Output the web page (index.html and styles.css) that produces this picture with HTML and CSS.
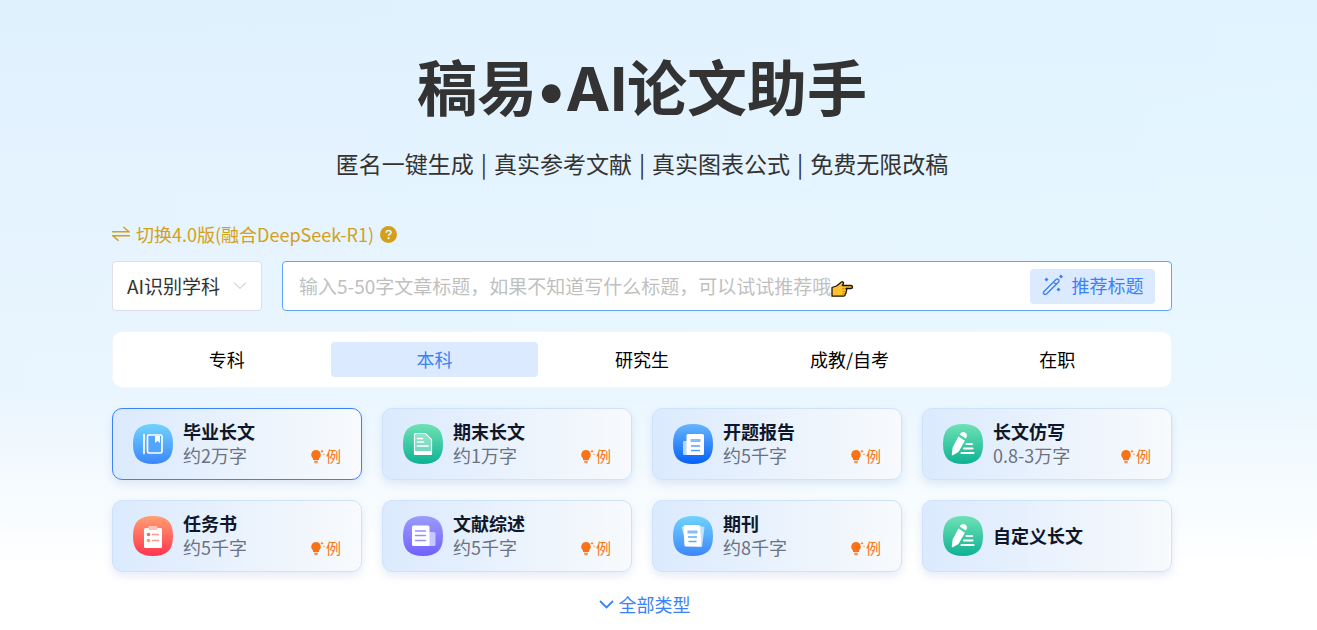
FILE: index.html
```html
<!DOCTYPE html>
<html lang="zh-CN">
<head>
    <meta charset="UTF-8">
    <meta name="viewport" content="width=device-width, initial-scale=1.0">
    <title>稿易·AI论文助手</title>
    <link rel="stylesheet" href="styles.css">
</head>
<body>
    <!-- Shared icons -->
    <svg class="sprite" aria-hidden="true">
        <defs>
            <linearGradient id="sky" x1="0" y1="0" x2="0" y2="1"><stop offset="0" stop-color="#70d3fc"/><stop offset="1" stop-color="#3d86fb"/></linearGradient>
            <linearGradient id="green" x1="0" y1="0" x2="0" y2="1"><stop offset="0" stop-color="#6ee2b4"/><stop offset="1" stop-color="#0eb294"/></linearGradient>
            <linearGradient id="blue" x1="0" y1="0" x2="0" y2="1"><stop offset="0" stop-color="#68b5fb"/><stop offset="1" stop-color="#0561f8"/></linearGradient>
            <linearGradient id="red" x1="0" y1="0" x2="0" y2="1"><stop offset="0" stop-color="#fea071"/><stop offset="1" stop-color="#fe3450"/></linearGradient>
            <linearGradient id="purple" x1="0" y1="0" x2="0" y2="1"><stop offset="0" stop-color="#9a9cfd"/><stop offset="1" stop-color="#7061fc"/></linearGradient>
        </defs>
        <symbol id="tile" viewBox="0 0 40 40">
            <path d="M20 0C34 0 40 6 40 20S34 40 20 40 0 34 0 20 6 0 20 0z"/>
        </symbol>
        <symbol id="pencil" viewBox="0 0 40 40">
            <path fill="#fff" d="M16.700 10.500l1.300-1.700q2-1.500 4.500 0 2.200 1.500 1.300 3.700l-.9 2zM15.500 12.500l6.400 4.200L15.500 28l-5.700 3.200q-1.200.3-1-.8l.8-6.900z"/>
            <path stroke="#fff" stroke-width="2.200" stroke-linecap="round" d="M23.500 20h5.500M21 24.500h8.500M18.500 29h12"/>
        </symbol>
        <symbol id="bulb" viewBox="0 0 15 15">
            <path fill="currentColor" d="M5 1a4.800 4.800 0 0 1 3 8.500V11H2V9.500A4.800 4.800 0 0 1 5 1zM3 11.800h4v1H3zM3.500 13.300h3v1h-3zM11 .5l.5 1.300 1.300.5-1.300.5-.5 1.300-.5-1.300-1.300-.5 1.300-.5zM13 4.200l.3.800.8.300-.8.300-.3.800-.3-.8-.8-.3.800-.3z"/>
        </symbol>
    </svg>

    <div class="container">
        <h1>稿易•AI论文助手</h1>
        <p class="slogan">
            <span>匿名一键生成</span><i>|</i><span>真实参考文献</span><i>|</i><span>真实图表公式</span><i>|</i><span>免费无限改稿</span>
        </p>

        <a class="switch" href="#">
            <svg width="18" height="18" viewBox="0 0 18 18" fill="none" stroke="currentColor" stroke-width="1.500"><path d="M0 6.800h17L11.500 2M18 10.800H1l5.500 5"/></svg>
            <span>切换4.0版(融合DeepSeek-R1)</span>
            <svg class="help" width="17" height="17" viewBox="0 0 17 17"><circle cx="8.500" cy="8.500" r="8.500" fill="currentColor"/><path d="M6.200 6.800q.1-2.300 2.400-2.300t2.300 2q0 1.100-1.200 1.800t-1.100 1.500" fill="none" stroke="#e3f2fd" stroke-width="1.700"/><circle cx="8.600" cy="12.200" r="1.100" fill="#e3f2fd"/></svg>
        </a>

        <!-- Title form -->
        <form class="search">
            <div class="subject">
                <select aria-label="学科">
                    <option>AI识别学科</option>
                </select>
                <svg width="14" height="8" viewBox="0 0 14 8" fill="none" stroke="#b8bcc4"><path d="M1 .5l6 6 6-6"/></svg>
            </div>
            <div class="field">
                <input type="text" aria-label="文章标题" placeholder="输入5-50字文章标题，如果不知道写什么标题，可以试试推荐哦">
                <svg class="hand" width="22" height="16" viewBox="0 0 22 16"><path d="M1 6.500L5.500 5l5-4q1.500-.7 2 .5.200 1-1.200 3H20q1.500.2 1.500 1.500T20 7.500h-5l.8 1.500-.7 1.500v1.500l-1 1v1.200q-.5 1-2 1H1z" fill="#ffc12f" stroke="#1c1508" stroke-width="1.300" stroke-linejoin="round"/><path d="M11 7.800h4M11.500 10.500h3.300M11 13h3" stroke="#b97d14" stroke-width=".8"/></svg>
                <button class="recommend" type="button">
                    <svg width="22" height="22" viewBox="0 0 22 22" fill="none" stroke="currentColor" stroke-width="1.400"><path d="M2 17.500L14 5.500q1.500-1 2.500 0t0 2.500L4.500 20q-1.400 1-2.500 0t0-2.500zM11.500 8l2.500 2.500"/><g fill="currentColor" stroke="none"><path d="M4.500 3.500L6.500 5.500 4.500 7.500 2.500 5.500zM19 .5l2 2-2 2-2-2zM16.500 13.500l2 2-2 2-2-2z"/></g></svg>
                    <span>推荐标题</span>
                </button>
            </div>
        </form>

        <div class="tabs">
            <button type="button">专科</button>
            <button type="button" class="active">本科</button>
            <button type="button">研究生</button>
            <button type="button">成教/自考</button>
            <button type="button">在职</button>
        </div>

        <!-- Document types -->
        <div class="cards">
            <div class="card selected">
                <svg class="icon" viewBox="0 0 40 40"><use href="#tile" fill="url(#sky)"/><path d="M11 10.500v19" stroke="#fff" stroke-width="1.700" stroke-linecap="round"/><rect x="14.500" y="11" width="14.500" height="18" rx="1.500" fill="#52a5fb" stroke="#fff" stroke-width="1.700"/><path d="M22 12h5v7l-2.500-2-2.500 2z" fill="#fff"/></svg>
                <div class="info"><h3>毕业长文</h3><p>约2万字</p></div>
                <a class="demo" href="#"><svg><use href="#bulb"/></svg>例</a>
            </div>
            <div class="card">
                <svg class="icon" viewBox="0 0 40 40"><use href="#tile" fill="url(#green)"/><path d="M11.500 10.500q0-1 1-1h10l6 6v14q0 1-1 1h-15q-1 0-1-1z" fill="#fff" fill-opacity=".35" stroke="#fff" stroke-width="1.200"/><path d="M11 27h18v3q0 1-1 1H12q-1 0-1-1z" fill="#fff"/><path d="M14.500 14.500h5M14.500 18h6M14.500 22h10.500" stroke="#fff" stroke-width="1.700" stroke-linecap="round"/></svg>
                <div class="info"><h3>期末长文</h3><p>约1万字</p></div>
                <a class="demo" href="#"><svg><use href="#bulb"/></svg>例</a>
            </div>
            <div class="card">
                <svg class="icon" viewBox="0 0 40 40"><use href="#tile" fill="url(#blue)"/><rect x="10" y="17" width="6" height="14" rx="1" fill="#b4d7ff"/><rect x="13.500" y="10" width="17.500" height="21" rx="1.500" fill="#fff"/><path d="M17.500 15h10v3h-10z" fill="#8abafc"/><path d="M18 22h9M18 26.500h9" stroke="#5a9ffb" stroke-width="1.300"/></svg>
                <div class="info"><h3>开题报告</h3><p>约5千字</p></div>
                <a class="demo" href="#"><svg><use href="#bulb"/></svg>例</a>
            </div>
            <div class="card">
                <svg class="icon" viewBox="0 0 40 40"><use href="#tile" fill="url(#green)"/><use href="#pencil"/></svg>
                <div class="info"><h3>长文仿写</h3><p>0.8-3万字</p></div>
                <a class="demo" href="#"><svg><use href="#bulb"/></svg>例</a>
            </div>
            <div class="card">
                <svg class="icon" viewBox="0 0 40 40"><use href="#tile" fill="url(#red)"/><rect x="11" y="12" width="18" height="20" rx="1.500" fill="#fff"/><rect x="15.500" y="10" width="9" height="4" rx="1" fill="#ffc4b8"/><circle cx="15.500" cy="18.500" r="1.800" fill="#e8706a"/><circle cx="15.500" cy="24.500" r="1.800" fill="#fe9a70"/><path d="M19 18.500h7M19 24.500h7" stroke="#fe9a94" stroke-width="1.300"/></svg>
                <div class="info"><h3>任务书</h3><p>约5千字</p></div>
                <a class="demo" href="#"><svg><use href="#bulb"/></svg>例</a>
            </div>
            <div class="card">
                <svg class="icon" viewBox="0 0 40 40"><use href="#tile" fill="url(#purple)"/><path d="M25 16h6q1.500 0 1.500 1.500v11q0 1.500-1.500 1.500h-6z" fill="#c9c7ff"/><rect x="9" y="9.500" width="17.500" height="20.500" rx="1.500" fill="#fff"/><path d="M12.500 15h10M12.500 19.500h10M12.500 24.500h10" stroke="#9791fc" stroke-width="1.500" stroke-linecap="round"/></svg>
                <div class="info"><h3>文献综述</h3><p>约5千字</p></div>
                <a class="demo" href="#"><svg><use href="#bulb"/></svg>例</a>
            </div>
            <div class="card">
                <svg class="icon" viewBox="0 0 40 40"><use href="#tile" fill="url(#sky)"/><path d="M8.500 11l15-1.500 8 1.500-2.500 20-15-1z" fill="#c0e2ff"/><path d="M12 9h13q2 0 2.200 1.500l1 18.500q0 1.500-1.500 1.500H13q-1.500 0-1.600-1.500L10.500 11q0-2 1.500-2z" fill="#fff"/><path d="M14.500 14.500h10v3h-10z" fill="#83bffb"/><path d="M15 21h9M15.500 25.500h8" stroke="#5aaafb" stroke-width="1.500"/></svg>
                <div class="info"><h3>期刊</h3><p>约8千字</p></div>
                <a class="demo" href="#"><svg><use href="#bulb"/></svg>例</a>
            </div>
            <div class="card">
                <svg class="icon" viewBox="0 0 40 40"><use href="#tile" fill="url(#green)"/><use href="#pencil"/></svg>
                <div class="info"><h3>自定义长文</h3></div>
            </div>
        </div>

        <a class="more" href="#">
            <svg width="15" height="9" viewBox="0 0 15 9" fill="none" stroke="currentColor" stroke-width="1.800"><path d="M1 1l6.500 6.500L14 1"/></svg>
            <span>全部类型</span>
        </a>
    </div>
</body>
</html>
```
FILE: styles.css
```css
* {
    box-sizing: border-box;
}
body {
    margin: 0;
    padding: 0 33px 0 0;
    min-height: 100vh;
    font-family: "Noto Sans CJK SC", sans-serif;
    font-size: 18px;
    line-height: 24px;
    color: #333;
    background: linear-gradient(180deg, rgba(255, 255, 255, 0) 0%, rgba(255, 255, 255, 0.3) 62%, #fff 90%), linear-gradient(100deg, #e0f1fe, #e1f4fe);
}
h1, h3, p {
    margin: 0;
}
a {
    text-decoration: none;
}
button, input, select {
    font: inherit;
    border: none;
}
svg {
    flex: none;
}
.sprite {
    position: absolute;
    width: 0;
    height: 0;
}
.container {
    max-width: 1060px;
    margin: auto;
    padding-top: 49px;
}
h1 {
    font-family: Inter, "Noto Sans CJK SC", sans-serif;
    font-size: 60px;
    line-height: 80px;
    font-weight: bold;
    text-align: center;
}
.slogan {
    display: flex;
    justify-content: center;
    gap: 7px;
    margin-top: 18px;
    font-size: 23px;
    line-height: 32px;
}
.slogan i {
    font-style: normal;
}
.switch {
    display: flex;
    align-items: center;
    gap: 6px;
    width: fit-content;
    margin-top: 43px;
    color: #d4a017;
}

/* Title form */
.search {
    display: flex;
    gap: 20px;
    margin-top: 15px;
}
.subject {
    display: flex;
    align-items: center;
    position: relative;
    width: 150px;
    height: 50px;
    background: #fff;
    border: 1px solid #dcdfe6;
    border-radius: 4px;
}
.subject select {
    appearance: none;
    width: 100%;
    height: 100%;
    padding: 0 14px;
    font-size: 19px;
    color: #333;
    background: none;
}
.subject svg {
    position: absolute;
    right: 14px;
    pointer-events: none;
}
.field {
    flex: 1;
    display: flex;
    align-items: center;
    height: 50px;
    padding: 0 16px;
    background: #fff;
    border: 1px solid #60a5fa;
    border-radius: 4px;
}
.field input {
    width: 532px;
    padding: 0;
    font-size: 19px;
    background: none;
    outline: none;
}
.field input::placeholder {
    color: #bfbfbf;
}
.hand {
    margin-top: 6px;
}
.recommend {
    display: flex;
    align-items: center;
    justify-content: center;
    gap: 8px;
    width: 125px;
    height: 35px;
    margin-left: auto;
    padding: 0 0 2px;
    color: #3b82f6;
    background: #dbeafe;
    border-radius: 4px;
    cursor: pointer;
}

.tabs {
    display: flex;
    margin-top: 20px;
    padding: 10px;
    background: #fff;
    border: 1px solid #f3f6fa;
    border-radius: 10px;
}
.tabs button {
    flex: 1;
    height: 35px;
    padding: 0 0 2px;
    color: #000;
    background: none;
    border-radius: 4px;
    cursor: pointer;
}
.tabs .active {
    color: #3b82f6;
    background: #dbeafe;
}

/* Document types */
.cards {
    display: grid;
    grid-template-columns: repeat(4, 1fr);
    gap: 20px;
    margin-top: 20px;
}
.card {
    display: flex;
    align-items: center;
    gap: 10px;
    height: 72px;
    padding: 0 20px;
    background: linear-gradient(90deg, #dbeafe, #f8fafc);
    border: 1px solid #cfe2fc;
    border-radius: 10px;
    box-shadow: 0 4px 8px rgba(59, 100, 180, 0.13);
}
.card.selected {
    border-color: #3b82f6;
}
.icon {
    width: 40px;
    height: 40px;
}
.info {
    flex: 1;
    padding-bottom: 2px;
}
.info h3 {
    font-size: 18px;
    font-weight: bold;
    color: #0f172a;
}
.info p {
    color: #6b7280;
}
.demo {
    display: flex;
    align-items: center;
    align-self: flex-end;
    margin-bottom: 11px;
    font-size: 15px;
    color: #f97316;
}
.demo svg {
    width: 15px;
    height: 15px;
}
.more {
    display: flex;
    align-items: center;
    justify-content: center;
    gap: 5px;
    margin-top: 20px;
    padding-left: 5px;
    color: #3b82f6;
}
```
